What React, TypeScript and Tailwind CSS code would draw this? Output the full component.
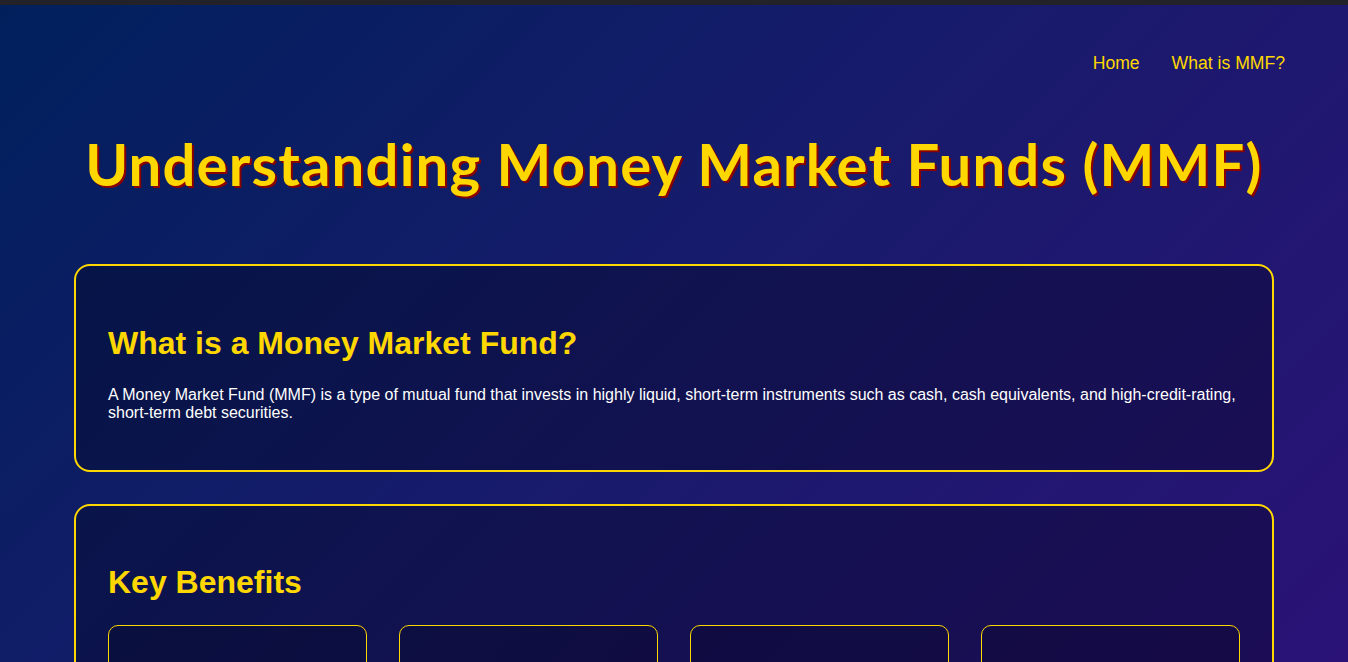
const benefits = [
  { title: "High Liquidity", text: "Access your money quickly, usually within one business day." },
  { title: "Low Risk", text: "Invests in high-quality, short-term debt instruments." },
  { title: "Stable Returns", text: "Earn better returns than a regular savings account." },
  { title: "Diversification", text: "Your money is spread across many different securities." },
];

export default function App() {
  return (
    <div className="min-h-screen bg-fixed bg-[linear-gradient(135deg,#00205c_0%,#181b6c_50%,#2a1276_100%)] font-['Liberation_Sans',Arial,sans-serif] text-white">
      <div className="h-[5px] bg-[#232228]" />

      <nav className="flex justify-end gap-[32px] pt-[48px] pr-[63px]">
        <a href="#" className="text-[17.6px] leading-[20px] text-[#ffd700]">Home</a>
        <a href="#" className="text-[17.6px] leading-[20px] text-[#ffd700]">What is MMF?</a>
      </nav>

      <h1 className="mt-[51px] text-center text-[58px] leading-[80px] font-bold tracking-[1.2px] text-[#ffd700] font-['Comic_Sans_MS',Lato,sans-serif] [text-shadow:2px_2px_0_#8b0000]">
        Understanding Money Market Funds (MMF)
      </h1>

      <main className="mx-auto mt-[60px] flex max-w-[1200px] flex-col gap-[34px] pb-16">
        <section className="rounded-[16px] border-2 border-[#ffd700] bg-[rgba(0,0,12,0.3)] px-[32px] pt-[32px] pb-[33px]">
          <h2 className="mt-[27px] mb-[24px] text-[32px] leading-[36.8px] font-bold text-[#ffd700]">
            What is a Money Market Fund?
          </h2>
          <p className="mb-[14px] text-[16px] leading-[18.4px]">
            A Money Market Fund (MMF) is a type of mutual fund that invests in highly liquid, short-term instruments such as cash, cash equivalents, and high-credit-rating, short-term debt securities.
          </p>
        </section>

        <section className="-mt-[2px] rounded-[16px] border-2 border-[#ffd700] bg-[rgba(0,0,12,0.3)] px-[32px] pt-[32px] pb-[32px]">
          <h2 className="mt-[26px] mb-[25px] text-[32px] leading-[36.8px] font-bold text-[#ffd700]">
            Key Benefits
          </h2>
          <div className="grid grid-cols-4 gap-[32px]">
            {benefits.map((b) => (
              <div key={b.title} className="rounded-[10px] border border-[#ffd700] bg-[rgba(0,0,10,0.2)] px-6 pt-[44px] pb-6">
                <h3 className="text-[20px] font-bold text-[#ffd700]">{b.title}</h3>
                <p className="mt-3 text-[16px] leading-[18.4px]">{b.text}</p>
              </div>
            ))}
          </div>
        </section>
      </main>
    </div>
  );
}
